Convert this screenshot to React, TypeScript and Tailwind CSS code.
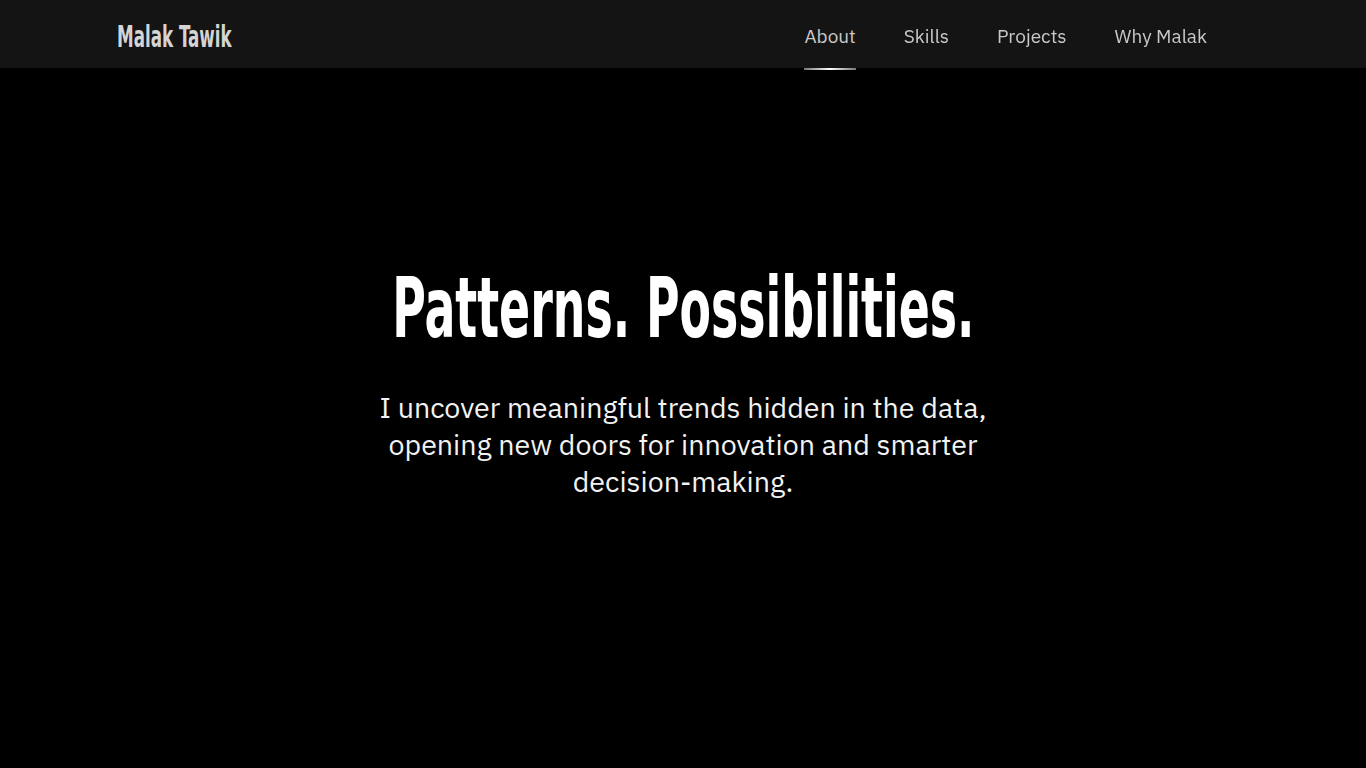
export default function App() {
  const links = ["About", "Skills", "Projects", "Why Malak"]

  return (
    <div className="min-h-screen bg-black text-white font-['IBM_Plex_Sans','Open_Sans',sans-serif]">
      {/* Navbar */}
      <header className="fixed top-0 left-0 right-0 z-10 h-[68px] bg-[#141414]">
        <div className="flex items-center justify-between h-full pl-[117px] pr-[159px]">
          <a
            href="#"
            className="block origin-left scale-x-[0.62] text-[30px] font-bold text-[#d4d4d4] font-['DejaVu_Sans',sans-serif] font-stretch-condensed pt-[4px]"
          >
            Malak Tawik
          </a>
          <nav className="flex items-center gap-[48px] h-full">
            {links.map((link, i) => (
              <a
                key={link}
                href="#"
                className="relative flex items-center h-full pt-[4px] text-[19px] text-[#c8c8c8]"
              >
                {link}
                {i === 0 && (
                  <span className="absolute left-0 right-0 bottom-[-2px] h-[2px] bg-gradient-to-r from-[#777] via-white to-[#777]" />
                )}
              </a>
            ))}
          </nav>
        </div>
      </header>

      {/* Hero */}
      <main className="flex flex-col items-center justify-center min-h-screen px-4 pb-[3px] text-center">
        <h1 className="scale-x-[0.606] text-[84px] leading-none font-bold font-['DejaVu_Sans',sans-serif] font-stretch-condensed mb-[39px] whitespace-nowrap">
          Patterns. Possibilities.
        </h1>
        <p className="max-w-[650px] text-[28.6px] leading-[37px] text-[#f2f2f2]">
          I uncover meaningful trends hidden in the data, opening new doors for innovation and smarter decision-making.
        </p>
      </main>
    </div>
  )
}
